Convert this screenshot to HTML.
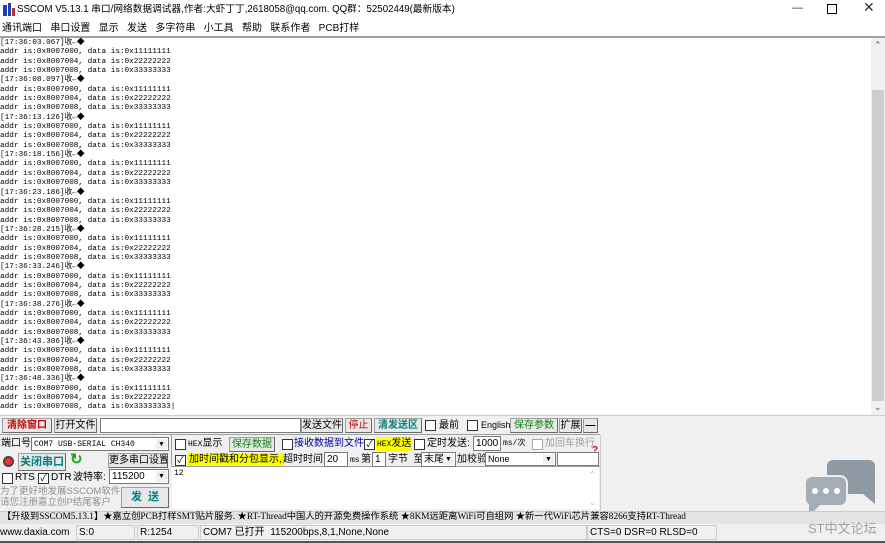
<!DOCTYPE html>
<html><head><meta charset="utf-8"><style>
*{margin:0;padding:0;box-sizing:border-box}
body{width:885px;height:543px;overflow:hidden;background:#f0f0f0;font-family:"Liberation Sans","Noto Sans CJK SC",sans-serif;font-size:10px;color:#000;position:relative}
.a{position:absolute;white-space:nowrap;line-height:13px}
.btn{position:absolute;background:#e8e8e8;border:1px solid #a0a0a0;border-right-color:#696969;border-bottom-color:#696969;text-align:center;font-size:10px;line-height:13px;white-space:nowrap;overflow:hidden}
.cb{position:absolute;width:11px;height:11px;border:1px solid #333;background:#fff;font-size:9px;line-height:9px;text-align:center}
.in{position:absolute;background:#fff;border:1px solid #7a7a7a;font-size:10px;line-height:13px;padding-left:2px;white-space:nowrap}
.dd{position:absolute;right:1px;top:1px;width:11px;bottom:1px;background:#f0f0f0;font-size:7px;line-height:12px;text-align:center}
.mono{font-family:"Liberation Mono",monospace}
#log{position:absolute;left:0;top:38px;width:871px;height:377px;background:#fff;font-family:"Liberation Mono","Noto Sans CJK SC",monospace;font-size:7.7px;line-height:9.35px;padding-top:1px;overflow:hidden;white-space:pre}
</style></head><body>
<div class="a" style="left:0;top:0;width:885px;height:37px;background:#fff"></div>
<svg class="a" style="left:3px;top:3px" width="12" height="13"><rect x="0" y="2" width="4" height="11" fill="#2040b0"/><rect x="5" y="0" width="3" height="13" fill="#2040b0"/><rect x="9" y="5" width="3" height="8" fill="#c03030"/></svg>
<div class="a" style="left:17px;top:3px;font-size:9.7px">SSCOM V5.13.1 串口/网络数据调试器,作者:大虾丁丁,2618058@qq.com. QQ群：52502449(最新版本)</div>
<div class="a" style="left:792px;top:2px;font-size:11px;color:#333">—</div>
<div class="a" style="left:827px;top:4px;width:10px;height:10px;border:1px solid #000"></div>
<div class="a" style="left:863px;top:1px;font-size:14px;color:#333">✕</div>
<div class="a" style="left:2px;top:22px;font-size:10px">通讯端口&nbsp;&nbsp; 串口设置&nbsp;&nbsp; 显示&nbsp;&nbsp; 发送&nbsp;&nbsp; 多字符串&nbsp;&nbsp; 小工具&nbsp;&nbsp; 帮助&nbsp;&nbsp; 联系作者&nbsp;&nbsp; PCB打样</div>
<div class="a" style="left:0;top:36px;width:885px;height:2px;background:#a0a0a0"></div>
<div id="log">[17:36:03.067]收←◆
addr is:0x8007000, data is:0x11111111
addr is:0x8007004, data is:0x22222222
addr is:0x8007008, data is:0x33333333
[17:36:08.097]收←◆
addr is:0x8007000, data is:0x11111111
addr is:0x8007004, data is:0x22222222
addr is:0x8007008, data is:0x33333333
[17:36:13.126]收←◆
addr is:0x8007000, data is:0x11111111
addr is:0x8007004, data is:0x22222222
addr is:0x8007008, data is:0x33333333
[17:36:18.156]收←◆
addr is:0x8007000, data is:0x11111111
addr is:0x8007004, data is:0x22222222
addr is:0x8007008, data is:0x33333333
[17:36:23.186]收←◆
addr is:0x8007000, data is:0x11111111
addr is:0x8007004, data is:0x22222222
addr is:0x8007008, data is:0x33333333
[17:36:28.215]收←◆
addr is:0x8007000, data is:0x11111111
addr is:0x8007004, data is:0x22222222
addr is:0x8007008, data is:0x33333333
[17:36:33.246]收←◆
addr is:0x8007000, data is:0x11111111
addr is:0x8007004, data is:0x22222222
addr is:0x8007008, data is:0x33333333
[17:36:38.276]收←◆
addr is:0x8007000, data is:0x11111111
addr is:0x8007004, data is:0x22222222
addr is:0x8007008, data is:0x33333333
[17:36:43.306]收←◆
addr is:0x8007000, data is:0x11111111
addr is:0x8007004, data is:0x22222222
addr is:0x8007008, data is:0x33333333
[17:36:48.336]收←◆
addr is:0x8007000, data is:0x11111111
addr is:0x8007004, data is:0x22222222
addr is:0x8007008, data is:0x33333333|</div>
<div class="a" style="left:871px;top:38px;width:14px;height:377px;background:#f0f0f0"></div>
<div class="a" style="left:872px;top:90px;width:12px;height:311px;background:#cdcdcd"></div>
<div class="a" style="left:874px;top:39px;font-size:9px;color:#555">⌃</div>
<div class="a" style="left:874px;top:401px;font-size:9px;color:#555">⌄</div>
<div class="a" style="left:0;top:415px;width:885px;height:1px;background:#ccc"></div>

<!-- row1 -->
<div class="btn" style="left:2px;top:418px;width:50px;height:15px;color:#c00000;font-weight:bold">清除窗口</div>
<div class="btn" style="left:54px;top:418px;width:43px;height:15px">打开文件</div>
<div class="in" style="left:100px;top:418px;width:201px;height:15px"></div>
<div class="btn" style="left:301px;top:418px;width:42px;height:15px">发送文件</div>
<div class="btn" style="left:345px;top:418px;width:27px;height:15px;color:#c00000">停止</div>
<div class="btn" style="left:374px;top:418px;width:48px;height:15px;color:#008080;font-weight:bold">清发送区</div>
<div class="cb" style="left:425px;top:420px"></div><div class="a" style="left:439px;top:419px">最前</div>
<div class="cb" style="left:467px;top:420px"></div><div class="a" style="left:481px;top:419px;font-size:9px">English</div>
<div class="btn" style="left:510px;top:418px;width:48px;height:15px;color:#108010">保存参数</div>
<div class="btn" style="left:559px;top:418px;width:23px;height:15px">扩展</div>
<div class="btn" style="left:583px;top:418px;width:15px;height:15px;font-weight:bold">—</div>
<div class="a" style="left:0;top:434px;width:600px;height:1px;background:#a0a0a0"></div>

<!-- row2 -->
<div class="a" style="left:1px;top:437px">端口号</div>
<div class="in mono" style="left:31px;top:437px;width:138px;height:14px;font-size:8px">COM7 USB-SERIAL CH340<div class="dd">▼</div></div>
<div class="a" style="left:171px;top:435px;width:1px;height:30px;background:#a0a0a0"></div>
<div class="cb" style="left:175px;top:439px"></div><div class="a" style="left:188px;top:437px"><span class="mono" style="font-size:8px">HEX</span>显示</div>
<div class="btn" style="left:229px;top:437px;width:46px;height:15px;color:#108010">保存数据</div>
<div class="cb" style="left:282px;top:439px"></div><div class="a" style="left:294px;top:437px;color:#0000a0">接收数据到文件</div>
<div class="cb" style="left:364px;top:439px">✓</div><div class="a" style="left:376px;top:437px;background:#ffff00;padding:0 1px"><span class="mono" style="font-size:8px">HEX</span>发送</div>
<div class="cb" style="left:414px;top:439px"></div><div class="a" style="left:427px;top:437px">定时发送:</div>
<div class="in" style="left:473px;top:436px;width:28px;height:15px">1000</div>
<div class="a mono" style="left:503px;top:437px;font-size:8px">ms/次</div>
<div class="cb" style="left:532px;top:439px;border-color:#aaa"></div><div class="a" style="left:545px;top:437px;color:#a0a0a0">加回车换行</div>
<div class="a" style="left:592px;top:444px;color:#e00000;font-weight:bold;font-size:10px">?</div>

<!-- row3 -->
<div class="a" style="left:3px;top:456px;width:11px;height:11px;border-radius:50%;background:radial-gradient(#ff3030 30%,#404040 60%)"></div>
<div class="btn" style="left:18px;top:453px;width:48px;height:18px;color:#008080;font-weight:bold;font-size:11px;line-height:16px">关闭串口</div>
<div class="a" style="left:70px;top:453px;color:#20a020;font-size:15px;font-weight:bold">↻</div>
<div class="btn" style="left:108px;top:453px;width:60px;height:15px">更多串口设置</div>
<div class="a" style="left:171px;top:466px;width:429px;height:1px;background:#a0a0a0"></div>
<div class="cb" style="left:175px;top:455px">✓</div><div class="a" style="left:187px;top:453px;background:#ffff00;padding:0 2px">加时间戳和分包显示,</div>
<div class="a" style="left:283px;top:453px">超时时间:</div>
<div class="in" style="left:324px;top:452px;width:24px;height:15px">20</div>
<div class="a mono" style="left:350px;top:454px;font-size:8px">ms</div>
<div class="a" style="left:361px;top:453px">第</div>
<div class="in" style="left:372px;top:452px;width:14px;height:15px">1</div>
<div class="a" style="left:388px;top:453px">字节&nbsp; 至</div>
<div class="in" style="left:421px;top:452px;width:35px;height:15px">末尾<div class="dd">▼</div></div>
<div class="a" style="left:457px;top:453px">加校验</div>
<div class="in" style="left:485px;top:452px;width:71px;height:14px;font-size:9px">None<div class="dd">▼</div></div>
<div class="in" style="left:557px;top:452px;width:42px;height:14px"></div>

<!-- row4 -->
<div class="cb" style="left:2px;top:473px"></div><div class="a" style="left:15px;top:471px">RTS</div>
<div class="cb" style="left:38px;top:473px">✓</div><div class="a" style="left:51px;top:471px">DTR</div>
<div class="a" style="left:73px;top:471px">波特率:</div>
<div class="in" style="left:109px;top:469px;width:60px;height:15px">115200<div class="dd">▼</div></div>
<div class="a" style="left:0;top:486px;color:#909090;font-size:9.5px;line-height:11px">为了更好地发展SSCOM软件<br>请您注册嘉立创P结尾客户</div>
<div class="btn" style="left:121px;top:487px;width:48px;height:21px;color:#008080;font-weight:bold;font-size:11px;line-height:19px">发&nbsp; 送</div>
<div class="a mono" style="left:172px;top:467px;width:427px;height:42px;background:#fff;font-size:8px;padding:0 2px">12</div>
<div class="a" style="left:589px;top:468px;color:#bbb;font-size:8px">⌃</div>
<div class="a" style="left:589px;top:496px;color:#bbb;font-size:8px">⌄</div>
<div class="a" style="left:600px;top:435px;width:1px;height:76px;background:#ccc"></div>

<!-- watermark -->
<svg class="a" style="left:805px;top:458px" width="72" height="60"><rect x="22" y="2" width="48" height="34" rx="6" fill="#8e99a4"/><polygon points="58,36 70,46 70,30" fill="#8e99a4"/><rect x="0" y="18" width="42" height="30" rx="7" fill="#a5aeb6" stroke="#f0f0f0" stroke-width="2"/><polygon points="4,44 4,58 16,46" fill="#a5aeb6"/><circle cx="10" cy="33" r="3" fill="#fff"/><circle cx="21" cy="33" r="3" fill="#fff"/><circle cx="32" cy="33" r="3" fill="#fff"/></svg>

<!-- ticker -->
<div class="a" style="left:0;top:511px;width:885px;height:13px;background:#e4e4e4;border-top:1px solid #ccc"></div>
<div class="a" style="left:2px;top:511px;font-size:9.3px;font-family:'Liberation Serif','Noto Sans CJK SC',serif">【升级到SSCOM5.13.1】★嘉立创PCB打样SMT贴片服务. ★RT-Thread中国人的开源免费操作系统 ★8KM远距离WiFi可自组网 ★新一代WiFi芯片兼容8266支持RT-Thread</div>

<!-- status -->
<div class="a" style="left:0;top:525px;width:885px;height:16px;background:#f0f0f0"></div>
<div class="a" style="left:0;top:526px;font-size:10px">www.daxia.com</div>
<div class="a" style="left:76px;top:525px;width:59px;height:15px;border:1px solid #ccc;font-size:10px;padding-left:2px">S:0</div>
<div class="a" style="left:137px;top:525px;width:62px;height:15px;border:1px solid #ccc;font-size:10px;padding-left:2px">R:1254</div>
<div class="a" style="left:200px;top:525px;width:387px;height:15px;border:1px solid #ccc;font-size:10px;padding-left:2px">COM7 已打开&nbsp; 115200bps,8,1,None,None</div>
<div class="a" style="left:587px;top:525px;width:130px;height:15px;border:1px solid #ccc;font-size:10px;padding-left:2px">CTS=0 DSR=0 RLSD=0</div>
<div class="a" style="left:808px;top:521px;font-size:13px;color:#9aa3ab;line-height:16px">ST中文论坛</div>
<div class="a" style="left:0;top:541px;width:885px;height:2px;background:#555"></div>
</body></html>
